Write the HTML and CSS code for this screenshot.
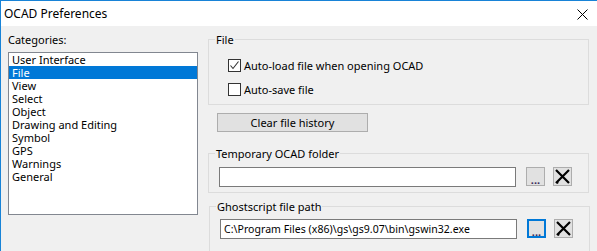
FILE: index.html
```html
<!DOCTYPE html>
<html>
<head>
<meta charset="utf-8">
<link rel="stylesheet" href="styles.css">
</head>
<body>
<div class="window">
  <div class="titlebar">
    <span class="title">OCAD Preferences</span>
    <svg class="close" width="11" height="11" viewBox="0 0 11 11"><path d="M0.5 0.5 L10.5 10.5 M10.5 0.5 L0.5 10.5" stroke="#000" stroke-width="1" fill="none"/></svg>
  </div>
  <div class="content">
    <div class="left">
      <div class="label">Categories:</div>
      <ul class="list">
        <li>User Interface</li>
        <li class="sel">File</li>
        <li>View</li>
        <li>Select</li>
        <li>Object</li>
        <li>Drawing and Editing</li>
        <li>Symbol</li>
        <li>GPS</li>
        <li>Warnings</li>
        <li>General</li>
      </ul>
    </div>
    <div class="right">
      <fieldset class="group g-file">
        <legend>File</legend>
        <div class="g-body file-body">
          <div class="check-row">
            <span class="cbox"><svg width="11" height="11" viewBox="0 0 11 11"><path d="M1.5 5.5 L4 8.5 L9.5 1.5" stroke="#333" stroke-width="1.1" fill="none"/></svg></span>
            <span>Auto-load file when opening OCAD</span>
          </div>
          <div class="check-row">
            <span class="cbox"></span>
            <span>Auto-save file</span>
          </div>
        </div>
      </fieldset>
      <button class="btn clear">Clear file history</button>
      <fieldset class="group g-temp">
        <legend>Temporary OCAD folder</legend>
        <div class="g-body path-row">
          <input class="tbox" type="text" value="">
          <button class="btn small dots">...</button>
          <button class="btn small xbtn"><svg width="17" height="17" viewBox="0 0 17 17"><path d="M2 2 L15 15 M15 2 L2 15" stroke="#000" stroke-width="2.2" fill="none"/><path d="M1.5 14 L3.5 16 L5 14.5 Z" fill="#000"/></svg></button>
        </div>
      </fieldset>
      <fieldset class="group g-gs">
        <legend>Ghostscript file path</legend>
        <div class="g-body path-row">
          <input class="tbox" type="text" value="C:\Program Files (x86)\gs\gs9.07\bin\gswin32.exe">
          <button class="btn small dots focus">...</button>
          <button class="btn small xbtn"><svg width="17" height="17" viewBox="0 0 17 17"><path d="M2 2 L15 15 M15 2 L2 15" stroke="#000" stroke-width="2.2" fill="none"/><path d="M1.5 14 L3.5 16 L5 14.5 Z" fill="#000"/></svg></button>
        </div>
      </fieldset>
    </div>
  </div>
</div>
</body>
</html>
```

FILE: styles.css
```css
html, body {
  margin: 0;
  padding: 0;
  background: #f0f0f0;
}
body {
  font-family: "Noto Sans", "DejaVu Sans", sans-serif;
  font-size: 11px;
  color: #000;
}
.window {
  width: 597px;
  height: 251px;
  box-sizing: border-box;
  border-top: 1px solid #1883d7;
  border-left: 1px solid #1883d7;
  overflow: hidden;
  display: flex;
  flex-direction: column;
}
.titlebar {
  height: 25px;
  background: #fff;
  display: flex;
  align-items: center;
  justify-content: space-between;
  padding: 0 9px 0 3px;
  flex: none;
}
.title {
  font-size: 12px;
  line-height: 16px;
}
.close {
  display: block;
  margin-top: 1px;
}
.content {
  flex: 1;
  display: flex;
  padding-left: 7px;
  background: #f0f0f0;
}
.left {
  width: 190px;
  padding-top: 7px;
  flex: none;
}
.label {
  line-height: 13px;
  height: 13px;
  margin-bottom: 6px;
}
.list {
  list-style: none;
  margin: 0;
  padding: 0;
  box-sizing: border-box;
  height: 163px;
  background: #fff;
  border: 1px solid #828790;
}
.list li {
  height: 13px;
  line-height: 13px;
  padding-left: 3px;
  white-space: nowrap;
}
.list li.sel {
  background: #0078d7;
  color: #fff;
}
.right {
  margin-left: 10px;
  width: 381px;
  flex: none;
  display: flex;
  flex-direction: column;
  align-items: flex-start;
}
.group {
  margin: 0;
  padding: 0;
  border: 1px solid #dcdcdc;
  min-inline-size: 0;
  box-sizing: border-box;
  width: 381px;
}
.group legend {
  margin-left: 6px;
  padding: 0 1px;
  line-height: 13px;
  height: 13px;
}
.g-file {
  margin-top: 7px;
}
.file-body {
  padding: 13px 0 8px 19px;
  display: flex;
  flex-direction: column;
  gap: 11px;
}
.check-row {
  display: flex;
  align-items: center;
  height: 13px;
  line-height: 13px;
  gap: 3px;
}
.cbox {
  width: 13px;
  height: 13px;
  box-sizing: border-box;
  border: 1px solid #333;
  background: #fff;
  display: flex;
  align-items: center;
  justify-content: center;
  flex: none;
}
.cbox svg {
  display: block;
}
.btn {
  font-family: inherit;
  font-size: 11px;
  color: #000;
  background: #e1e1e1;
  border: 1px solid #adadad;
  box-sizing: border-box;
  padding: 0;
  margin: 0;
  line-height: 15px;
}
.clear {
  width: 151px;
  height: 19px;
  margin: 8px 0 0 9px;
}
.g-temp {
  margin-top: 15px;
}
.path-row {
  display: flex;
  align-items: flex-start;
  padding: 7px 0 5px 10px;
}
.tbox {
  width: 297px;
  height: 20px;
  box-sizing: border-box;
  border: 1px solid #7a7a7a;
  background: #fff;
  font-family: inherit;
  font-size: 10.5px;
  letter-spacing: 0.05px;
  padding: 0 3px;
  margin: 0;
  outline: none;
}
.small {
  width: 19px;
  height: 19px;
  display: flex;
  align-items: center;
  justify-content: center;
}
.dots {
  margin-left: 10px;
  line-height: 11px;
  padding-top: 5px;
  font-weight: bold;
  color: #3a2a5a;
}
.dots.focus {
  border: 2px solid #0078d7;
}
.xbtn {
  margin-left: 8px;
}
.xbtn svg {
  display: block;
}
.g-gs {
  margin-top: 7px;
  margin-left: 1px;
  height: 60px;
}
.g-gs .path-row {
  padding-top: 6px;
}
```
